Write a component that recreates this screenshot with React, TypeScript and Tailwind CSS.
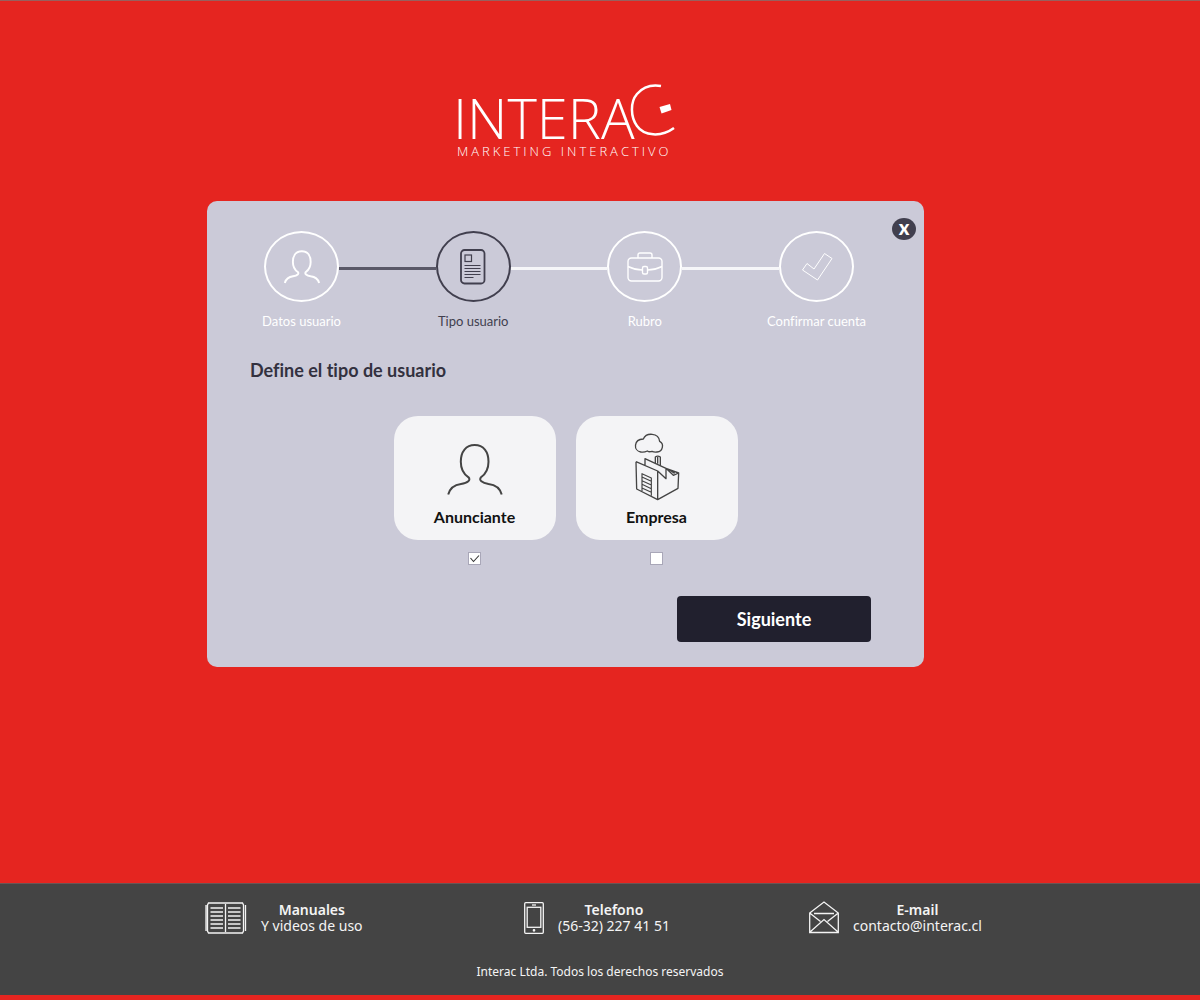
import { useState } from "react";
import type { ReactNode } from "react";

function Logo() {
  return (
    <svg viewBox="0 0 220 76" className="h-[76px] w-[220px] overflow-visible" role="img" aria-label="Interac Marketing Interactivo" fill="white">
      <text x="-3" y="55" className="font-['Open_Sans',sans-serif] text-[56px] font-light">INTERA</text>
      <text x="1" y="72" className="font-['Open_Sans',sans-serif] text-[13px] font-light tracking-[3px]">MARKETING INTERACTIVO</text>
      <path d="M205 2C196 0.500 187 3 181 10C174 18 174.500 33 181 42C188 52 205 53.500 218 44" fill="none" stroke="white" strokeWidth="2.500" />
      <path d="M203.500 23L214 20L215.500 26L205.500 29.500Z" />
    </svg>
  );
}

function PersonIcon({ className, strokeWidth }: { className: string; strokeWidth: number }) {
  return (
    <svg viewBox="0 0 56 53" className={className} fill="none" stroke="currentColor" strokeWidth={strokeWidth} aria-hidden="true">
      <path d="M1.200 51.500C3 45 8 41.800 14 41C21 40 24 37 21.500 34.300C16.500 31 13.800 25 13.800 18.700C13.800 8.500 19 2 27.700 2C36.500 2 41.500 8.500 41.500 18.700C41.500 25 38.500 31 34 34.300C31.500 37 35 40 41.500 41C48 41.800 53 45 54.700 51.500" />
    </svg>
  );
}

function DocumentIcon() {
  return (
    <svg viewBox="0 0 26 36" className="h-9 w-[26px]" fill="none" stroke="currentColor" aria-hidden="true">
      <rect x="1" y="1" width="23.500" height="33.500" rx="3.500" strokeWidth="1.800" />
      <rect x="5" y="6" width="6.500" height="6.500" strokeWidth="1.200" />
      <path d="M4.500 16.500H20.500M4.500 19.500H20.500M4.500 22.500H20.500M4.500 25.500H20.500M4.500 28.500H13.500" strokeWidth="1.200" />
    </svg>
  );
}

function BriefcaseIcon() {
  return (
    <svg viewBox="0 0 36 30" className="h-[30px] w-9" fill="none" stroke="currentColor" strokeWidth="1.400" aria-hidden="true">
      <rect x="1" y="6" width="34" height="23" rx="3.500" />
      <path d="M11 6V3Q11 1 13 1H23Q25 1 25 3V6M1 14.500Q8 18 15.500 18M35 14.500Q28 18 20.500 18" />
      <rect x="15.500" y="14.500" width="5" height="7.500" rx="1.500" />
    </svg>
  );
}

function CheckOutlineIcon() {
  return (
    <svg viewBox="0 0 32 30" className="h-[30px] w-8" fill="none" stroke="currentColor" strokeWidth="1" aria-hidden="true">
      <path d="M1.500 18L6 11.500L13 17L23.500 1.500L31 6.500L16.500 28Z" />
    </svg>
  );
}

function FactoryIcon() {
  return (
    <svg viewBox="220 98 138 204" className="h-[68px] w-[46px]" fill="none" stroke="currentColor" strokeWidth="4" strokeLinejoin="round" aria-hidden="true">
      <path d="M240 155C218 151 218 117 248 116C256 96 294 96 297 123C311 130 307 154 289 155Q280 156 274 153Q266 156 260 152Q250 157 240 155Z" />
      <path d="M226 184L228 266L291 298L352 264L354 218L316 204V235L291 212L226 184M291 212V298M253 195V175L316 204L338 225L354 218M326 208L342 219" />
      <path d="M284 188V170Q291 165 299 170V196M291 170V190" />
      <path d="M244 272V220L272 233V286M244 230L272 243M244 241L272 254M244 252L272 265M244 263L272 276" strokeWidth="3.500" />
    </svg>
  );
}

function BookIcon() {
  return (
    <svg viewBox="0 0 42 32" className="h-8 w-[42px]" fill="none" stroke="currentColor" strokeWidth="1.300" aria-hidden="true">
      <path d="M20.500 2V30M3.500 1H37.500L38.500 3V29L37.500 31H3.500L2.500 29V3ZM1 3V29M40.500 3V29" />
      <path d="M5.500 6H18M5.500 10H18M5.500 14H18M5.500 18H18M5.500 22H18M5.500 26H18M23 6H35.500M23 10H35.500M23 14H35.500M23 18H35.500M23 22H35.500M23 26H35.500" />
    </svg>
  );
}

function PhoneIcon() {
  return (
    <svg viewBox="0 0 20 32" className="h-8 w-5" fill="none" stroke="currentColor" strokeWidth="1.300" aria-hidden="true">
      <rect x="0.700" y="0.700" width="18.600" height="30.600" rx="1" />
      <rect x="3.200" y="5.300" width="13.600" height="20" />
      <path d="M8 3H12" />
      <circle cx="10" cy="28.300" r="0.700" fill="currentColor" />
    </svg>
  );
}

function MailIcon() {
  return (
    <svg viewBox="0 0 30 33" className="h-[33px] w-[30px]" fill="none" stroke="currentColor" strokeWidth="1.300" aria-hidden="true">
      <path d="M0.700 12L15 1L29.300 12V31.500H0.700ZM5 12.500H25M0.700 12L11.500 20.500M29.300 12L18.500 20.500M1 31L15 18.500L29 31" />
    </svg>
  );
}

const steps: { label: string; icon: ReactNode }[] = [
  { label: "Datos usuario", icon: <PersonIcon className="h-[34px] w-9" strokeWidth={3} /> },
  { label: "Tipo usuario", icon: <DocumentIcon /> },
  { label: "Rubro", icon: <BriefcaseIcon /> },
  { label: "Confirmar cuenta", icon: <CheckOutlineIcon /> },
];

function Stepper({ current }: { current: number }) {
  return (
    <ol className="flex pr-[70px] pl-[57px]">
      {steps.map((step, i) => (
        <li key={step.label} aria-current={i === current ? "step" : undefined} className={i > 0 ? "flex flex-1" : "flex"}>
          {i > 0 && <span className={`mt-9 h-[3px] flex-1 ${i === current ? "bg-[#5a5868]" : "bg-[#f6f6f9]"}`} />}
          <div className={`flex w-[75px] flex-col items-center gap-[7px] ${i === current ? "text-[#413f4e]" : "text-white"}`}>
            <span className="flex h-[71px] w-full items-center justify-center rounded-[50%] border-2 border-current">{step.icon}</span>
            <span className="text-[13px] leading-6 whitespace-nowrap">{step.label}</span>
          </div>
        </li>
      ))}
    </ol>
  );
}

function UserTypeOption({ label, icon, checked, onChange }: { label: string; icon: ReactNode; checked: boolean; onChange: () => void }) {
  return (
    <label className="flex flex-col items-center gap-3">
      <span className="flex h-[124px] w-[162px] flex-col items-center justify-end rounded-[24px] bg-[#f4f4f6] pb-[11px] text-[#444]">
        {icon}
        <span className="mt-1 text-[16px] leading-6 font-bold text-[#111]">{label}</span>
      </span>
      <span className="grid">
        <input type="checkbox" checked={checked} onChange={onChange} className="peer col-start-1 row-start-1 size-[13px] appearance-none border border-[#a9a7b8] bg-white" />
        <svg viewBox="0 0 13 13" className="pointer-events-none col-start-1 row-start-1 hidden size-[13px] peer-checked:block" fill="none" stroke="#333" strokeWidth="1.100" aria-hidden="true">
          <path d="M2.500 6L5.500 9.500L11 3.500" />
        </svg>
      </span>
    </label>
  );
}

function Contact({ icon, title, children }: { icon: ReactNode; title: string; children: ReactNode }) {
  return (
    <div className="flex items-center gap-3.5">
      {icon}
      <p className="text-center text-[14px] leading-4 whitespace-nowrap">
        <strong className="block font-semibold">{title}</strong>
        {children}
      </p>
    </div>
  );
}

export default function App() {
  const [type, setType] = useState("anunciante");
  return (
    <div className="flex min-h-screen flex-col border-t border-[#98605e] bg-[#e52520] pb-[5px] font-['Lato',sans-serif] [font-variant-ligatures:no-common-ligatures]">
      <div className="mx-auto w-full max-w-[786px] pt-[83px] pr-[69px]">
        <header className="flex justify-center">
          <Logo />
        </header>
        <main className="relative mt-[41px] rounded-[10px] bg-[#cbcad8] pt-[30px] pb-[25px]">
          <button type="button" aria-label="Cerrar" className="absolute top-[17px] right-2 flex h-[22px] w-6 items-center justify-center rounded-[50%] bg-[#413f4e] pb-[5px] text-[20px] leading-none font-black text-white">
            x
          </button>
          <Stepper current={1} />
          <h1 className="mt-[21px] pl-[43px] text-[18px] leading-8 font-bold text-[#33313f]">Define el tipo de usuario</h1>
          <div className="mt-[30px] flex justify-center gap-5">
            <UserTypeOption label="Anunciante" icon={<PersonIcon className="mb-[5px] h-[53px] w-14" strokeWidth={2} />} checked={type === "anunciante"} onChange={() => setType("anunciante")} />
            <UserTypeOption label="Empresa" icon={<FactoryIcon />} checked={type === "empresa"} onChange={() => setType("empresa")} />
          </div>
          <div className="mt-[31px] flex justify-end pr-[53px]">
            <button type="button" className="h-[46px] w-[194px] rounded bg-[#21202e] text-[18px] font-bold text-white">Siguiente</button>
          </div>
        </main>
      </div>
      <footer className="mt-auto border-t border-[#6a5555] bg-[#444] pt-[17px] pb-[13px] font-['Noto_Sans',sans-serif] text-[#f4f4f4]">
        <div className="mx-auto grid max-w-[790px] grid-cols-[319fr_285fr_186fr] items-center">
          <Contact icon={<BookIcon />} title="Manuales">Y videos de uso</Contact>
          <Contact icon={<PhoneIcon />} title="Telefono">(56-32) 227 41 51</Contact>
          <Contact icon={<MailIcon />} title="E-mail"><a href="mailto:contacto@interac.cl">contacto@interac.cl</a></Contact>
        </div>
        <p className="mt-7 text-center text-[12px] leading-5">Interac Ltda. Todos los derechos reservados</p>
      </footer>
    </div>
  );
}
